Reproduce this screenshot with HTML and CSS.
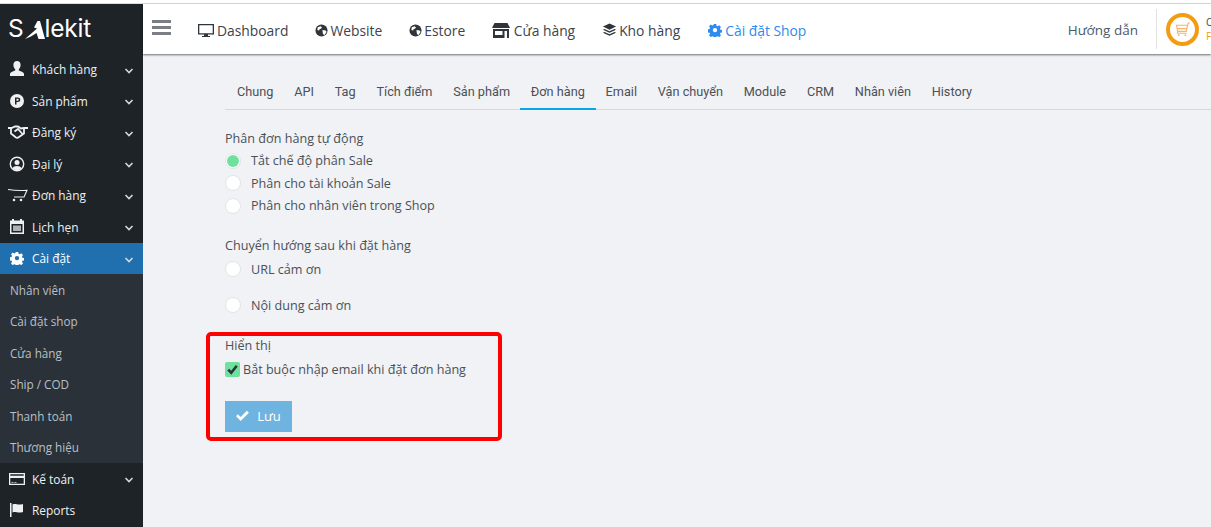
FILE: index.html
```html
<!DOCTYPE html>
<html lang="vi">
<head>
<meta charset="utf-8">
<title>Salekit</title>
<link rel="stylesheet" href="styles.css">
</head>
<body>
<svg class="defs" width="0" height="0" aria-hidden="true">
  <symbol id="chev" viewBox="0 0 10 8"><path d="M1.500 2 5 5.500 8.500 2" fill="none" stroke="currentColor" stroke-width="1.600"/></symbol>
  <symbol id="gear" viewBox="0 0 16 16"><path fill="currentColor" fill-rule="evenodd" d="M6.600 1h2.800l.4 2 1.300.6 1.800-1.100 1.900 2-1.100 1.700.5 1.400 2 .4v2.700l-2 .4-.5 1.300 1.100 1.800-1.900 1.900-1.800-1.100-1.300.5-.4 2H6.600l-.4-2-1.300-.5-1.800 1.100-1.900-1.900 1.100-1.800-.5-1.300-2-.4V7.300l2-.4.5-1.400L1.200 3.800l1.900-2 1.800 1.100 1.300-.6zM8 5.600a2.500 2.500 0 1 0 0 5 2.500 2.500 0 0 0 0-5z"/></symbol>
  <symbol id="globe" viewBox="0 0 14 14"><circle cx="7" cy="7" r="6.500" fill="currentColor"/><path fill="#fff" d="M3 3.500 6 2.500l1.500 1-1 1.500-1.500.5-.5 1.500-2-.5zM8 6.500l3.500.5 1 1.500-2.500 3.500-1.500-1.500z"/></symbol>
</svg>
<div class="topline"></div>
<div class="app">
  <aside class="sidebar">
    <div class="logo"><span>S</span><svg class="logo-a" viewBox="0 0 20 18"><path fill="#fff" d="M0 18 12 7.500 9 6.500 12.500 0H15l5 18h-6.500l-2-6C8 14.500 4 16.500 0 18z"/></svg><span>lekit</span></div>
    <nav class="menu">
      <a class="item"><svg class="ico" viewBox="0 0 16 16"><path fill="currentColor" d="M8 0c2.200 0 3.600 1.600 3.600 4 0 1.900-.9 3.500-1.800 4.300v1.200c1.500.7 5.200 1.500 5.200 3.600V15H1v-1.900c0-2.100 3.700-2.900 5.200-3.600V8.300C5.300 7.500 4.400 5.900 4.400 4 4.400 1.600 5.800 0 8 0z"/></svg><span class="txt">Khách hàng</span><svg class="chev"><use href="#chev"/></svg></a>
      <a class="item"><svg class="ico" viewBox="0 0 16 16"><path fill="currentColor" fill-rule="evenodd" d="M8 1a7 7 0 1 1 0 14A7 7 0 0 1 8 1zM6 4.500v7h1.500V9h1.300c1.500 0 2.500-1 2.500-2.300S10.300 4.500 8.800 4.500zm1.500 1.300h1.100c.7 0 1.100.4 1.100.9s-.4 1-1.100 1H7.500z"/></svg><span class="txt">Sản phẩm</span><svg class="chev"><use href="#chev"/></svg></a>
      <a class="item"><svg class="ico ico-wide" viewBox="0 0 20 14"><path fill="none" stroke="currentColor" stroke-width="1.800" d="M0 3h3.500L7 1.500h3L13 3.500 16 3h4M3 3v5.500L8 12.500c1 .6 2 .3 3-.4l5-3.600V3M6.500 6.500 10 4l4.500 5"/></svg><span class="txt">Đăng ký</span><svg class="chev"><use href="#chev"/></svg></a>
      <a class="item"><svg class="ico" viewBox="0 0 16 16"><circle cx="8" cy="8" r="6.700" fill="none" stroke="currentColor" stroke-width="1.400"/><circle cx="8" cy="6.500" r="2.500" fill="currentColor"/><path fill="currentColor" d="M3.500 12.500c.6-1.800 2.300-2.500 4.500-2.500s3.900.7 4.500 2.500L8 15z"/></svg><span class="txt">Đại lý</span><svg class="chev"><use href="#chev"/></svg></a>
      <a class="item"><svg class="ico ico-wide" viewBox="0 0 20 14"><path fill="none" stroke="currentColor" stroke-width="1.100" d="M0 1.500c5 .8 12 1.200 19 .8l-3 6.700H6"/><circle cx="6" cy="12" r="1.300" fill="currentColor"/><circle cx="13" cy="12" r="1.300" fill="currentColor"/></svg><span class="txt">Đơn hàng</span><svg class="chev"><use href="#chev"/></svg></a>
      <a class="item"><svg class="ico" viewBox="0 0 16 16"><path fill="currentColor" fill-rule="evenodd" d="M3 0h2v1.500h6V0h2v1.500h2V15H1V1.500h2zM2.500 5v8.500h11V5z"/><path fill="currentColor" d="M4 6.500h8v5.500H4z" opacity=".7"/></svg><span class="txt">Lịch hẹn</span><svg class="chev"><use href="#chev"/></svg></a>
      <a class="item active"><svg class="ico ico-gear"><use href="#gear"/></svg><span class="txt">Cài đặt</span><svg class="chev"><use href="#chev"/></svg></a>
      <div class="submenu">
        <a class="sub">Nhân viên</a>
        <a class="sub">Cài đặt shop</a>
        <a class="sub">Cửa hàng</a>
        <a class="sub">Ship / COD</a>
        <a class="sub">Thanh toán</a>
        <a class="sub">Thương hiệu</a>
      </div>
      <a class="item"><svg class="ico" viewBox="0 0 16 14"><path fill="currentColor" fill-rule="evenodd" d="M0 1h16v12H0zm1.300 1.200v1.600h13.400V2.200zm0 3.800v5.800h13.400V6zM2.500 10h2v.8h-2zm3 0h2v.8h-2z"/></svg><span class="txt">Kế toán</span><svg class="chev"><use href="#chev"/></svg></a>
      <a class="item"><svg class="ico" viewBox="0 0 16 16"><path fill="currentColor" d="M1 1h1.500v14H1zM3.500 2.500c3-1.500 5 1 10.500-.5v8c-5 1.500-7.500-1-10.500.5z"/></svg><span class="txt">Reports</span></a>
    </nav>
  </aside>
  <div class="main">
    <header class="topbar">
      <div class="burger"><i></i><i></i><i></i></div>
      <nav class="topnav">
        <a class="tn"><svg class="tn-ico" viewBox="0 0 16 15"><path fill="currentColor" fill-rule="evenodd" d="M0 1h16v10.500H10v1.500h2v1H4v-1h2v-1.500H0zm1.300 1.200v8h13.400v-8z"/></svg>Dashboard</a>
        <a class="tn"><svg class="tn-ico tn-globe"><use href="#globe"/></svg>Website</a>
        <a class="tn"><svg class="tn-ico tn-globe"><use href="#globe"/></svg>Estore</a>
        <a class="tn"><svg class="tn-ico tn-store" viewBox="0 0 18 15"><path fill="currentColor" fill-rule="evenodd" d="M2.500 0h13L18 5H0zM1 6h16v9h-2V8h-2.500v7H1zm2 2v4h7.500V8z"/></svg>Cửa hàng</a>
        <a class="tn"><svg class="tn-ico tn-stack" viewBox="0 0 16 15"><path fill="currentColor" d="M8 0l7 3.300L8 6.600 1 3.300zM2.700 5.800 8 8.300l5.300-2.500 1.700.8L8 9.900 1 6.600zm0 3.300L8 11.600l5.300-2.500 1.700.8-7 3.300-7-3.300z"/></svg>Kho hàng</a>
        <a class="tn tn-set"><svg class="tn-ico"><use href="#gear"/></svg>Cài đặt Shop</a>
      </nav>
      <a class="guide">Hướng dẫn</a>
      <div class="account">
        <div class="cart"><svg viewBox="0 0 18 16"><path fill="none" stroke="#f7b469" stroke-width="1.200" d="M17 1h-2l-2 9H4L2.500 3.500H14.500M3.500 7h10M4 10l-.5 2h10"/><circle cx="5" cy="14" r="1" fill="#f7b469"/><circle cx="12" cy="14" r="1" fill="#f7b469"/></svg></div>
        <div class="acc-text"><span class="acc-name">Cửa</span><span class="acc-sub">FREE</span></div>
      </div>
    </header>
    <main class="content">
      <ul class="tabs">
        <li class="tab">Chung</li>
        <li class="tab">API</li>
        <li class="tab">Tag</li>
        <li class="tab">Tích điểm</li>
        <li class="tab">Sản phẩm</li>
        <li class="tab on">Đơn hàng</li>
        <li class="tab">Email</li>
        <li class="tab">Vận chuyển</li>
        <li class="tab">Module</li>
        <li class="tab">CRM</li>
        <li class="tab">Nhân viên</li>
        <li class="tab">History</li>
      </ul>
      <form class="form">
        <div class="group g1">
          <div class="glabel">Phân đơn hàng tự động</div>
          <div class="radio r1 first"><span class="dot checked"></span>Tắt chế độ phân Sale</div>
          <div class="radio r1"><span class="dot"></span>Phân cho tài khoản Sale</div>
          <div class="radio r1"><span class="dot"></span>Phân cho nhân viên trong Shop</div>
        </div>
        <div class="group g2">
          <div class="glabel">Chuyển hướng sau khi đặt hàng</div>
          <div class="radio r2 first"><span class="dot"></span>URL cảm ơn</div>
          <div class="radio r2"><span class="dot"></span>Nội dung cảm ơn</div>
        </div>
        <div class="group g3">
          <div class="highlight"></div>
          <div class="glabel">Hiển thị</div>
          <div class="check"><span class="box"><svg viewBox="0 0 14 14"><path fill="none" stroke="#2c343a" stroke-width="2.400" d="M3 7.200 5.800 10 11 3.500"/></svg></span>Bắt buộc nhập email khi đặt đơn hàng</div>
          <button type="button" class="save"><svg viewBox="0 0 14 12"><path fill="#fff" d="M1.800 4.500 5 7.700 11.800.8 14 3 5 12 0 6.700z"/></svg>Lưu</button>
        </div>
      </form>
    </main>
  </div>
</div>
</body>
</html>
```

FILE: styles.css
```css
* { box-sizing: border-box; }
html, body { margin: 0; height: 100%; overflow: hidden; }
body { background: #fff; font-family: "Open Sans", sans-serif; color: #3f4750; }
a { color: inherit; text-decoration: none; }
.defs { position: absolute; }
.topline { height: 4px; background: #fff; border-bottom: 1px solid #dcdcdc; }
.app { display: flex; height: 523px; }

.sidebar { width: 143px; flex: none; background: #1e2327; color: #eef0f2; overflow: hidden; }
.logo { height: 49.500px; padding: 0 0 1px 8px; font-family: Inter, sans-serif; font-size: 24.500px; line-height: 30px; letter-spacing: -.2px; color: #fff; display: flex; align-items: center; }
.logo-a { width: 20px; height: 18px; margin: 3px 0 0 1px; flex: none; }
.menu { display: flex; flex-direction: column; }
.item { height: 31.500px; flex: none; display: flex; align-items: center; padding: 0 9px; font-size: 11.900px; }
.ico { width: 16px; height: 16px; flex: none; margin-right: 7px; }
.ico-wide { width: 20px; height: 14px; margin-left: -1px; margin-right: 4px; }
.ico-gear { width: 14px; height: 14px; margin-left: 1px; margin-right: 8px; }
.txt { flex: 1; white-space: nowrap; }
.chev { width: 10px; height: 8px; flex: none; margin: 3px 0 0 0; color: #d5d8db; }
.item.active { background: #2070b0; color: #fff; }
.submenu { background: #2b3138; display: flex; flex-direction: column; }
.sub { height: 31.500px; display: flex; align-items: center; padding-left: 10px; font-size: 11.700px; color: #b8c0c8; }

.main { flex: 1; min-width: 0; display: flex; flex-direction: column; background: #f1f2f5; }
.topbar { height: 50px; flex: none; background: #fff; box-shadow: 0 1px 2px rgba(0,0,0,.55); display: flex; align-items: center; position: relative; }
.burger { width: 19px; margin-left: 9px; margin-top: -3px; display: flex; flex-direction: column; gap: 3px; flex: none; }
.burger i { height: 3px; background: #7b7f85; }
.topnav { display: flex; margin-left: 27px; flex: 1; padding-top: 2px; }
.tn { display: flex; align-items: center; font-size: 13.850px; color: #3d444b; white-space: nowrap; margin-right: 27px; }
.tn-ico { width: 16px; height: 15px; margin-right: 3px; flex: none; color: #2f353b; }
.tn-globe { width: 13px; height: 13px; margin-right: 2px; }
.tn-store { width: 18px; margin-right: 3.500px; }
.tn-stack { width: 15px; margin-right: 2px; }
.tn-set { margin-left: 1px; }
.tn-set, .tn-set .tn-ico { color: #2e8cf0; }
.tn-set .tn-ico { width: 14px; height: 14px; }
.guide { font-size: 13.500px; color: #4b5a6b; white-space: nowrap; margin-right: 18px; padding-top: 1px; }
.account { width: 55px; height: 40px; flex: none; border-left: 1px solid #e2e2e2; padding-left: 9px; display: flex; align-items: center; gap: 7px; overflow: hidden; }
.cart { width: 33px; height: 33px; flex: none; border: 4px solid #f39c12; border-radius: 50%; display: flex; align-items: center; justify-content: center; }
.cart svg { width: 17px; height: 15px; }
.acc-text { display: flex; flex-direction: column; font-size: 10px; line-height: 14px; white-space: nowrap; }
.acc-name { color: #3d444b; }
.acc-sub { color: #f39c12; }

.content { flex: 1; padding: 0 0 0 82px; }
.tabs { list-style: none; margin: 25px 0 0; padding: 0 0 0 1px; height: 31px; display: flex; border-bottom: 1px solid #d3d9e0; font-family: Roboto, sans-serif; font-size: 12.700px; color: #4a5057; }
.tab { height: 31px; padding: 0 11px; margin-right: -1.200px; line-height: 26px; border-bottom: 2px solid transparent; white-space: nowrap; }
.tab.on { border-bottom-color: #0aa7e8; }
.form { font-size: 12.600px; color: #4a5057; }
.group { position: relative; }
.g1 { padding-top: 18.500px; }
.g2 { padding-top: 19px; }
.g3 { padding-top: 13px; }
.glabel { height: 20px; line-height: 20px; white-space: nowrap; }
.radio { display: flex; align-items: center; white-space: nowrap; }
.r1 { height: 22.500px; }
.r1.first { margin-top: 1px; }
.r2 { height: 36px; }
.r2.first { margin-top: -5px; }
.dot { width: 16px; height: 16px; border-radius: 50%; background: #fff; border: 1px solid #e2e4e6; margin-right: 10px; flex: none; position: relative; }
.dot.checked::after { content: ""; position: absolute; inset: 1px; border-radius: 50%; background: #6ee19f; }
.check { display: flex; align-items: center; height: 26px; white-space: nowrap; }
.box { width: 15px; height: 15px; border-radius: 2px; background: #6ee19f; margin-right: 3px; flex: none; display: flex; }
.box svg { width: 15px; height: 15px; }
.save { display: flex; align-items: center; justify-content: center; gap: 8px; width: 67px; height: 31px; margin-top: 19px; padding: 0 0 2px; border: 0; background: #6fb3e0; color: #fff; font: inherit; font-size: 13px; }
.save svg { width: 13px; height: 11px; }
.highlight { position: absolute; left: -19px; top: 9px; width: 296px; height: 109px; border: 4px solid #f00; border-radius: 5px; pointer-events: none; }
```
